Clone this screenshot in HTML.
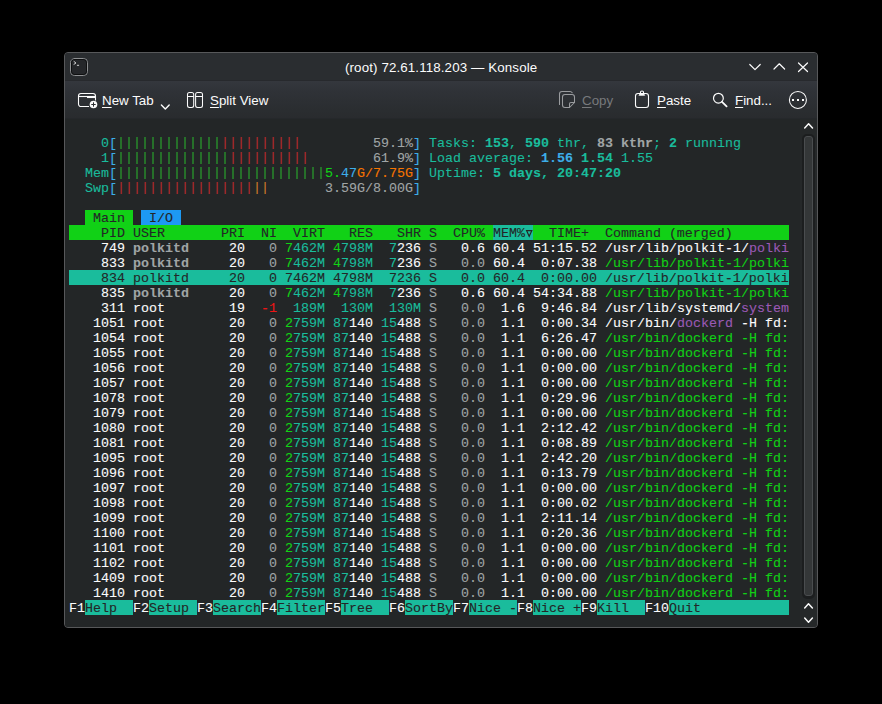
<!DOCTYPE html>
<html><head><meta charset="utf-8">
<style>
html,body{margin:0;padding:0;}
body{width:882px;height:704px;background:#000;position:relative;overflow:hidden;font-family:"Liberation Sans",sans-serif;}
.win{position:absolute;left:64px;top:52px;width:754px;height:576px;box-sizing:border-box;border:1px solid #57585a;border-radius:4px;background:#2a2d30;overflow:hidden;}
.title{position:absolute;left:0;top:0;width:752px;height:27px;background:#2a2d30;}
.tline{position:absolute;left:0;top:27px;width:752px;height:1px;background:#27292d;}
.tbar{position:absolute;left:0;top:28px;width:752px;height:37px;background:linear-gradient(#34373d,#2f3237 30%,#2a2d30 80%,#292b2e);}
.tline2{position:absolute;left:0;top:65px;width:752px;height:1px;background:#25282b;}
.term{position:absolute;left:0;top:66px;width:735px;height:509px;background:#232627;}
.sb{position:absolute;left:735px;top:66px;width:17px;height:509px;background:#252829;}
.thumb{position:absolute;left:2px;top:15px;width:13px;height:465px;box-sizing:border-box;border-radius:5px;background:#1c1e1f;}
.thumb2{position:absolute;left:2px;top:2px;width:9px;height:460px;box-sizing:border-box;border-radius:3px;background:#343738;border:1px solid #4a4d4f;}
pre{position:absolute;left:4px;top:17px;margin:0;font-family:"Liberation Mono",monospace;font-size:13.333px;line-height:15px;color:#fcfcfc;white-space:pre;-webkit-text-stroke:0.1px currentColor;}
.bg{position:absolute;height:15px;}
.tri{display:inline-block;width:8px;height:15px;vertical-align:top;}
.tri svg{display:block;}
.lbl{position:absolute;font-size:13.333px;color:#fcfcfc;white-space:nowrap;line-height:16px;}
.u{text-decoration:underline;text-underline-offset:2px;}
svg.ic{position:absolute;left:0;top:0;overflow:visible;}
</style></head><body>
<div class="win">
  <div class="title"></div>
  <div class="tline"></div>
  <div class="tbar"></div>
  <div class="tline2"></div>
  <div class="term"><div class="bg" style="left:20px;top:91px;width:48px;background:#11d116"></div><div class="bg" style="left:76px;top:91px;width:40px;background:#1d99f3"></div><div class="bg" style="left:4px;top:106px;width:424px;background:#11d116"></div><div class="bg" style="left:428px;top:106px;width:32px;background:#1abc9c"></div><div class="bg" style="left:460px;top:106px;width:8px;background:#1abc9c"></div><div class="bg" style="left:468px;top:106px;width:200px;background:#11d116"></div><div class="bg" style="left:668px;top:106px;width:56px;background:#11d116"></div><div class="bg" style="left:4px;top:151px;width:720px;background:#1abc9c"></div><div class="bg" style="left:20px;top:481px;width:48px;background:#1abc9c"></div><div class="bg" style="left:84px;top:481px;width:48px;background:#1abc9c"></div><div class="bg" style="left:148px;top:481px;width:48px;background:#1abc9c"></div><div class="bg" style="left:212px;top:481px;width:48px;background:#1abc9c"></div><div class="bg" style="left:276px;top:481px;width:48px;background:#1abc9c"></div><div class="bg" style="left:340px;top:481px;width:48px;background:#1abc9c"></div><div class="bg" style="left:404px;top:481px;width:48px;background:#1abc9c"></div><div class="bg" style="left:468px;top:481px;width:48px;background:#1abc9c"></div><div class="bg" style="left:532px;top:481px;width:48px;background:#1abc9c"></div><div class="bg" style="left:604px;top:481px;width:32px;background:#1abc9c"></div><div class="bg" style="left:636px;top:481px;width:88px;background:#1abc9c"></div><pre>    <span style="color:#1abc9c">0</span><span style="color:#3daee9">[</span><span style="color:#2a9c2c;position:relative;top:-1px">|||||||||||||</span><span style="color:#b42a2e;position:relative;top:-1px">||||||||||</span>         <span style="color:#a0a5a6">59.1%</span><span style="color:#3daee9">]</span> <span style="color:#1abc9c">Tasks: </span><span style="color:#1abc9c;font-weight:bold">153</span><span style="color:#1abc9c">, </span><span style="color:#1abc9c;font-weight:bold">590</span><span style="color:#1abc9c"> thr</span><span style="color:#1abc9c">, </span><span style="color:#a0a5a6;font-weight:bold">83 kthr</span><span style="color:#1abc9c">; </span><span style="color:#1abc9c;font-weight:bold">2</span><span style="color:#1abc9c"> running</span>
    <span style="color:#1abc9c">1</span><span style="color:#3daee9">[</span><span style="color:#2a9c2c;position:relative;top:-1px">||||||||||||||</span><span style="color:#b42a2e;position:relative;top:-1px">||||||||||</span>        <span style="color:#a0a5a6">61.9%</span><span style="color:#3daee9">]</span> <span style="color:#1abc9c">Load average: </span><span style="color:#3daee9;font-weight:bold">1.56</span> <span style="color:#1abc9c;font-weight:bold">1.54</span> <span style="color:#1abc9c">1.55</span>
  <span style="color:#1abc9c">Mem</span><span style="color:#3daee9">[</span><span style="color:#2a9c2c;position:relative;top:-1px">||||||||||||||||||||||||||</span><span style="color:#11d116">5.</span><span style="color:#3daee9">47</span><span style="color:#f67400">G/7.75G</span><span style="color:#3daee9">]</span> <span style="color:#1abc9c">Uptime: </span><span style="color:#1abc9c;font-weight:bold">5 days, 20:47:20</span>
  <span style="color:#1abc9c">Swp</span><span style="color:#3daee9">[</span><span style="color:#b42a2e;position:relative;top:-1px">|||||||||||||||||</span><span style="color:#d07a2a;position:relative;top:-1px">||</span>       <span style="color:#a0a5a6">3.59G/8.00G</span><span style="color:#3daee9">]</span>

  <span style="color:#232627"> Main </span> <span style="color:#232627"> I/O </span>
<span style="color:#232627">    PID USER       PRI  NI  VIRT   RES   SHR S  CPU% </span><span style="color:#232627">MEM%</span><span style="color:#232627"><span class="tri"><svg width="8" height="15" viewBox="0 0 8 15"><path d="M1.6 4.7 L6.8 4.7 L4.2 10.3 Z" fill="none" stroke="#232627" stroke-width="1.2"/></svg></span></span><span style="color:#232627">  TIME+  Command (merged)</span><span style="color:#232627">       </span>
    749 <span style="color:#a0a5a6;font-weight:bold">polkitd    </span> 20 <span style="color:#a0a5a6">  0</span> <span style="color:#11d116">7</span><span style="color:#1abc9c">462M</span> <span style="color:#11d116">4</span><span style="color:#1abc9c">798M</span>  <span style="color:#1abc9c">7</span>236 <span style="color:#a0a5a6">S</span>   0.6 60.4 51:15.52 /usr/lib/polkit-1/<span style="color:#9b59b6">polki</span>
    833 <span style="color:#a0a5a6;font-weight:bold">polkitd    </span> 20 <span style="color:#a0a5a6">  0</span> <span style="color:#11d116">7</span><span style="color:#1abc9c">462M</span> <span style="color:#11d116">4</span><span style="color:#1abc9c">798M</span>  <span style="color:#1abc9c">7</span>236 <span style="color:#a0a5a6">S</span> <span style="color:#a0a5a6">  0.0</span> 60.4  0:07.38 <span style="color:#11d116">/usr/lib/polkit-1/polki</span>
<span style="color:#232627">    834 polkitd     20   0 7462M 4798M  7236 S   0.0 60.4  0:00.00 /usr/lib/polkit-1/polki</span>
    835 <span style="color:#a0a5a6;font-weight:bold">polkitd    </span> 20 <span style="color:#a0a5a6">  0</span> <span style="color:#11d116">7</span><span style="color:#1abc9c">462M</span> <span style="color:#11d116">4</span><span style="color:#1abc9c">798M</span>  <span style="color:#1abc9c">7</span>236 <span style="color:#a0a5a6">S</span>   0.6 60.4 54:34.88 <span style="color:#11d116">/usr/lib/polkit-1/polki</span>
    311 root        19 <span style="color:#ed1515"> -1</span>  <span style="color:#1abc9c">189M</span>  <span style="color:#1abc9c">130M</span>  <span style="color:#1abc9c">130M</span> <span style="color:#a0a5a6">S</span> <span style="color:#a0a5a6">  0.0</span>  1.6  9:46.84 /usr/lib/systemd/<span style="color:#9b59b6">system</span>
   1051 root        20 <span style="color:#a0a5a6">  0</span> <span style="color:#11d116">2</span><span style="color:#1abc9c">759M</span> <span style="color:#1abc9c">87</span>140 <span style="color:#1abc9c">15</span>488 <span style="color:#a0a5a6">S</span> <span style="color:#a0a5a6">  0.0</span>  1.1  0:00.34 /usr/bin/<span style="color:#9b59b6">dockerd</span> -H fd:
   1054 root        20 <span style="color:#a0a5a6">  0</span> <span style="color:#11d116">2</span><span style="color:#1abc9c">759M</span> <span style="color:#1abc9c">87</span>140 <span style="color:#1abc9c">15</span>488 <span style="color:#a0a5a6">S</span> <span style="color:#a0a5a6">  0.0</span>  1.1  6:26.47 <span style="color:#11d116">/usr/bin/dockerd -H fd:</span>
   1055 root        20 <span style="color:#a0a5a6">  0</span> <span style="color:#11d116">2</span><span style="color:#1abc9c">759M</span> <span style="color:#1abc9c">87</span>140 <span style="color:#1abc9c">15</span>488 <span style="color:#a0a5a6">S</span> <span style="color:#a0a5a6">  0.0</span>  1.1  0:00.00 <span style="color:#11d116">/usr/bin/dockerd -H fd:</span>
   1056 root        20 <span style="color:#a0a5a6">  0</span> <span style="color:#11d116">2</span><span style="color:#1abc9c">759M</span> <span style="color:#1abc9c">87</span>140 <span style="color:#1abc9c">15</span>488 <span style="color:#a0a5a6">S</span> <span style="color:#a0a5a6">  0.0</span>  1.1  0:00.00 <span style="color:#11d116">/usr/bin/dockerd -H fd:</span>
   1057 root        20 <span style="color:#a0a5a6">  0</span> <span style="color:#11d116">2</span><span style="color:#1abc9c">759M</span> <span style="color:#1abc9c">87</span>140 <span style="color:#1abc9c">15</span>488 <span style="color:#a0a5a6">S</span> <span style="color:#a0a5a6">  0.0</span>  1.1  0:00.00 <span style="color:#11d116">/usr/bin/dockerd -H fd:</span>
   1078 root        20 <span style="color:#a0a5a6">  0</span> <span style="color:#11d116">2</span><span style="color:#1abc9c">759M</span> <span style="color:#1abc9c">87</span>140 <span style="color:#1abc9c">15</span>488 <span style="color:#a0a5a6">S</span> <span style="color:#a0a5a6">  0.0</span>  1.1  0:29.96 <span style="color:#11d116">/usr/bin/dockerd -H fd:</span>
   1079 root        20 <span style="color:#a0a5a6">  0</span> <span style="color:#11d116">2</span><span style="color:#1abc9c">759M</span> <span style="color:#1abc9c">87</span>140 <span style="color:#1abc9c">15</span>488 <span style="color:#a0a5a6">S</span> <span style="color:#a0a5a6">  0.0</span>  1.1  0:00.00 <span style="color:#11d116">/usr/bin/dockerd -H fd:</span>
   1080 root        20 <span style="color:#a0a5a6">  0</span> <span style="color:#11d116">2</span><span style="color:#1abc9c">759M</span> <span style="color:#1abc9c">87</span>140 <span style="color:#1abc9c">15</span>488 <span style="color:#a0a5a6">S</span> <span style="color:#a0a5a6">  0.0</span>  1.1  2:12.42 <span style="color:#11d116">/usr/bin/dockerd -H fd:</span>
   1081 root        20 <span style="color:#a0a5a6">  0</span> <span style="color:#11d116">2</span><span style="color:#1abc9c">759M</span> <span style="color:#1abc9c">87</span>140 <span style="color:#1abc9c">15</span>488 <span style="color:#a0a5a6">S</span> <span style="color:#a0a5a6">  0.0</span>  1.1  0:08.89 <span style="color:#11d116">/usr/bin/dockerd -H fd:</span>
   1095 root        20 <span style="color:#a0a5a6">  0</span> <span style="color:#11d116">2</span><span style="color:#1abc9c">759M</span> <span style="color:#1abc9c">87</span>140 <span style="color:#1abc9c">15</span>488 <span style="color:#a0a5a6">S</span> <span style="color:#a0a5a6">  0.0</span>  1.1  2:42.20 <span style="color:#11d116">/usr/bin/dockerd -H fd:</span>
   1096 root        20 <span style="color:#a0a5a6">  0</span> <span style="color:#11d116">2</span><span style="color:#1abc9c">759M</span> <span style="color:#1abc9c">87</span>140 <span style="color:#1abc9c">15</span>488 <span style="color:#a0a5a6">S</span> <span style="color:#a0a5a6">  0.0</span>  1.1  0:13.79 <span style="color:#11d116">/usr/bin/dockerd -H fd:</span>
   1097 root        20 <span style="color:#a0a5a6">  0</span> <span style="color:#11d116">2</span><span style="color:#1abc9c">759M</span> <span style="color:#1abc9c">87</span>140 <span style="color:#1abc9c">15</span>488 <span style="color:#a0a5a6">S</span> <span style="color:#a0a5a6">  0.0</span>  1.1  0:00.00 <span style="color:#11d116">/usr/bin/dockerd -H fd:</span>
   1098 root        20 <span style="color:#a0a5a6">  0</span> <span style="color:#11d116">2</span><span style="color:#1abc9c">759M</span> <span style="color:#1abc9c">87</span>140 <span style="color:#1abc9c">15</span>488 <span style="color:#a0a5a6">S</span> <span style="color:#a0a5a6">  0.0</span>  1.1  0:00.02 <span style="color:#11d116">/usr/bin/dockerd -H fd:</span>
   1099 root        20 <span style="color:#a0a5a6">  0</span> <span style="color:#11d116">2</span><span style="color:#1abc9c">759M</span> <span style="color:#1abc9c">87</span>140 <span style="color:#1abc9c">15</span>488 <span style="color:#a0a5a6">S</span> <span style="color:#a0a5a6">  0.0</span>  1.1  2:11.14 <span style="color:#11d116">/usr/bin/dockerd -H fd:</span>
   1100 root        20 <span style="color:#a0a5a6">  0</span> <span style="color:#11d116">2</span><span style="color:#1abc9c">759M</span> <span style="color:#1abc9c">87</span>140 <span style="color:#1abc9c">15</span>488 <span style="color:#a0a5a6">S</span> <span style="color:#a0a5a6">  0.0</span>  1.1  0:20.36 <span style="color:#11d116">/usr/bin/dockerd -H fd:</span>
   1101 root        20 <span style="color:#a0a5a6">  0</span> <span style="color:#11d116">2</span><span style="color:#1abc9c">759M</span> <span style="color:#1abc9c">87</span>140 <span style="color:#1abc9c">15</span>488 <span style="color:#a0a5a6">S</span> <span style="color:#a0a5a6">  0.0</span>  1.1  0:00.00 <span style="color:#11d116">/usr/bin/dockerd -H fd:</span>
   1102 root        20 <span style="color:#a0a5a6">  0</span> <span style="color:#11d116">2</span><span style="color:#1abc9c">759M</span> <span style="color:#1abc9c">87</span>140 <span style="color:#1abc9c">15</span>488 <span style="color:#a0a5a6">S</span> <span style="color:#a0a5a6">  0.0</span>  1.1  0:00.00 <span style="color:#11d116">/usr/bin/dockerd -H fd:</span>
   1409 root        20 <span style="color:#a0a5a6">  0</span> <span style="color:#11d116">2</span><span style="color:#1abc9c">759M</span> <span style="color:#1abc9c">87</span>140 <span style="color:#1abc9c">15</span>488 <span style="color:#a0a5a6">S</span> <span style="color:#a0a5a6">  0.0</span>  1.1  0:00.00 <span style="color:#11d116">/usr/bin/dockerd -H fd:</span>
   1410 root        20 <span style="color:#a0a5a6">  0</span> <span style="color:#11d116">2</span><span style="color:#1abc9c">759M</span> <span style="color:#1abc9c">87</span>140 <span style="color:#1abc9c">15</span>488 <span style="color:#a0a5a6">S</span> <span style="color:#a0a5a6">  0.0</span>  1.1  0:00.00 <span style="color:#11d116">/usr/bin/dockerd -H fd:</span>
F1<span style="color:#232627">Help  </span>F2<span style="color:#232627">Setup </span>F3<span style="color:#232627">Search</span>F4<span style="color:#232627">Filter</span>F5<span style="color:#232627">Tree  </span>F6<span style="color:#232627">SortBy</span>F7<span style="color:#232627">Nice -</span>F8<span style="color:#232627">Nice +</span>F9<span style="color:#232627">Kill  </span>F10<span style="color:#232627">Quit</span><span style="color:#232627">           </span></pre></div>
  <div class="sb"><div class="thumb"><div class="thumb2"></div></div></div>
</div>
<svg class="ic" width="882" height="704" viewBox="0 0 882 704" fill="none" stroke-linecap="round" stroke-linejoin="round">
  <!-- app icon -->
  <rect x="70.5" y="58.5" width="17" height="17" rx="4" fill="#25272a" stroke="#8e9092" stroke-width="1"/><rect x="71.5" y="59.5" width="15" height="15" rx="3" fill="none" stroke="#0e0f10" stroke-width="1"/>
  <path d="M74 61.5 L76 63 L74 64.3" stroke="#d0d0d0" stroke-width="1"/>
  <path d="M77.3 65.3 H78.7" stroke="#d0d0d0" stroke-width="1"/>
  <!-- title buttons -->
  <path d="M749.8 64.5 L755 69.7 L760.2 64.5" stroke="#fcfcfc" stroke-width="1.2"/>
  <path d="M774 69 L779.3 63.8 L784.6 69" stroke="#fcfcfc" stroke-width="1.2"/>
  <path d="M798.5 63 L807.5 71.5 M807.5 63 L798.5 71.5" stroke="#fcfcfc" stroke-width="1.2"/>
  <!-- new tab icon -->
  <path d="M89 106.5 H81 A2.5 2.5 0 0 1 78.5 104 V96 A2.5 2.5 0 0 1 81 93.5 H93 A2.5 2.5 0 0 1 95.5 96 V100.5" stroke="#fcfcfc" stroke-width="1.1" stroke-linecap="butt"/>
  <path d="M78.5 96.5 H95.5" stroke="#fcfcfc" stroke-width="1.1" stroke-linecap="butt"/>
  <path d="M87 97.5 H95.5" stroke="#fcfcfc" stroke-width="1.1" stroke-linecap="butt"/>
  <circle cx="93.5" cy="104.5" r="3.8" fill="#fcfcfc"/>
  <path d="M93.5 102.3 V106.7 M91.3 104.5 H95.7" stroke="#2a2d30" stroke-width="1" stroke-linecap="butt"/>
  <!-- dropdown chevron -->
  <path d="M161.4 105 L165.3 109 L169.2 105" stroke="#fcfcfc" stroke-width="1.4"/>
  <!-- split view -->
  <rect x="187.5" y="92.5" width="6.2" height="15" rx="2" stroke="#fcfcfc" stroke-width="1.05"/>
  <rect x="195.6" y="92.5" width="6.9" height="15" rx="2" stroke="#fcfcfc" stroke-width="1.05"/>
  <path d="M187.5 96.5 H193.7 M195.6 96.5 H202.5" stroke="#fcfcfc" stroke-width="1.05" stroke-linecap="butt"/>
  <!-- copy (disabled) -->
  <path d="M559.5 104.5 V94 A2.5 2.5 0 0 1 562 91.5 H570 A2.5 2.5 0 0 1 572.2 92.8" stroke="#9a9c9f" stroke-width="1.05"/>
  <path d="M565 107.5 A2.5 2.5 0 0 1 562.5 105 V97 A2.5 2.5 0 0 1 565 94.5 H572 A2.5 2.5 0 0 1 574.5 97 V102.5 L569.5 107.5 Z" stroke="#9a9c9f" stroke-width="1.05"/>
  <path d="M569.5 107.5 V104 A1.5 1.5 0 0 1 571 102.5 H574.5" stroke="#9a9c9f" stroke-width="1.05"/>
  <!-- paste -->
  <rect x="635.5" y="93.5" width="13" height="14" rx="2.5" stroke="#fcfcfc" stroke-width="1.1"/>
  <circle cx="642" cy="92.6" r="1.6" stroke="#fcfcfc" stroke-width="1.1"/>
  <path d="M639.3 95.3 H644.7 L643.7 94 H640.3 Z" fill="#fcfcfc" stroke="#fcfcfc" stroke-width="0.8"/>
  <!-- search -->
  <circle cx="718.4" cy="98.2" r="4.9" stroke="#fcfcfc" stroke-width="1.2"/>
  <path d="M722 101.8 L726.6 106.4" stroke="#fcfcfc" stroke-width="1.8"/>
  <!-- more -->
  <circle cx="797.9" cy="99.9" r="8.5" stroke="#fcfcfc" stroke-width="1.05"/>
  <rect x="792" y="99" width="2" height="2" fill="#fcfcfc"/>
  <rect x="797" y="99" width="2" height="2" fill="#fcfcfc"/>
  <rect x="802" y="99" width="2" height="2" fill="#fcfcfc"/>
  <!-- scrollbar arrows -->
  <path d="M804.7 128 L808.6 123.8 L812.5 128" stroke="#fcfcfc" stroke-width="1.5"/>
  <path d="M804.7 608 L808.5 603.8 L812.4 608" stroke="#fcfcfc" stroke-width="1.5"/>
  <path d="M804.7 618 L808.5 622.2 L812.4 618" stroke="#fcfcfc" stroke-width="1.5"/>
</svg>
<div class="lbl" style="left:345px;top:60px;width:192px;text-align:center;letter-spacing:0.12px;">(root) 72.61.118.203 — Konsole</div>
<div class="lbl" style="left:102px;top:93px;"><span class="u">N</span>ew Tab</div>
<div class="lbl" style="left:210px;top:93px;"><span class="u">S</span>plit View</div>
<div class="lbl" style="left:582px;top:93px;color:#77797c;"><span class="u">C</span>opy</div>
<div class="lbl" style="left:657px;top:93px;"><span class="u">P</span>aste</div>
<div class="lbl" style="left:735px;top:93px;"><span class="u">F</span>ind<span style="letter-spacing:-0.1px">...</span></div>
</body></html>
